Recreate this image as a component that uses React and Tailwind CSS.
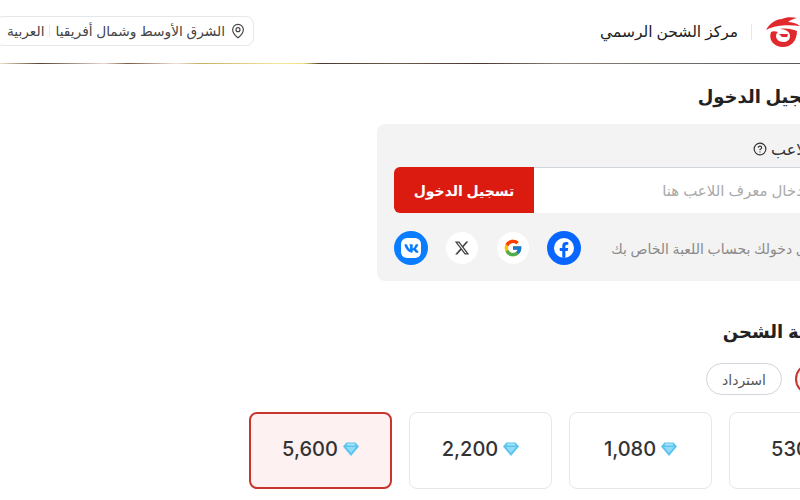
import React from "react";
import { MapPin, CircleHelp } from "lucide-react";
import { FcGoogle } from "react-icons/fc";
import { FaFacebookF, FaVk } from "react-icons/fa";
import { FaXTwitter } from "react-icons/fa6";

const amounts = [
  { value: "530", selected: false },
  { value: "1,080", selected: false },
  { value: "2,200", selected: false },
  { value: "5,600", selected: true },
];

const Logo = () => (
  <svg width="36" height="32" viewBox="0 0 36 32" fill="#e1282d" className="shrink-0">
    <path d="M2 14 C6 7 12 3 18 3 C22 1 28 1 33 2 C29 3 26 4 24 6 C28 6 32 7 36 10 C28 9 20 9 14 10 C9 11 5 12 2 14 Z" />
    <path d="M7 16 C4 24 10 31 19 31 C27 31 33 25 33 15 C28 13 22 12 16 13 C22 13 26 16 26 20 C26 24 23 26 19 26 C15 26 12 23 12 20 C12 18 13 17 14 16 C11 15 9 15 7 16 Z" />
    <path d="M15 18 H24 L23 21 H18 Z" />
  </svg>
);

const Gem = () => (
  <svg width="16" height="14" viewBox="0 0 16 14">
    <path d="M3.5 0.5 H12.5 L16 4.5 L8 14 L0 4.5 Z" fill="#5cc3f0" />
    <path d="M3 5 H13 L8 11 Z" fill="#8fdcf8" />
    <path d="M4.5 1.5 H11.5 L12.5 3.5 H3.5 Z" fill="#a5e6fb" />
  </svg>
);

const App = () => {
  return (
    <div className="w-[800px] h-[500px] overflow-hidden bg-white text-[#2b2b2b] font-['Noto_Sans','DejaVu_Sans',sans-serif]">
      {/* Header */}
      <header dir="rtl" className="w-[805px] -ml-[5px] h-[63px] flex items-center justify-between">
        <div className="flex items-center">
          <Logo />
          <span className="mr-[12px] ml-[13px] w-px h-[16px] bg-gray-200" />
          <span className="text-[15.5px] whitespace-nowrap text-[#222]">مركز الشحن الرسمي</span>
        </div>
        <div className="w-[259px] h-[30px] mb-[1px] flex items-center gap-[5px] pr-[7px] border border-gray-200 rounded-lg text-[#444] text-[13.75px] whitespace-nowrap overflow-hidden">
          <MapPin size={16} strokeWidth={1.75} className="shrink-0" />
          <span>الشرق الأوسط وشمال أفريقيا</span>
          <span className="w-px h-[12px] bg-gray-200" />
          <span>العربية</span>
        </div>
      </header>
      <div className="h-px w-full bg-[linear-gradient(90deg,#eee0c8_0%,#554433_5%,#e8d8d0_13%,#7a5c44_16%,#f0e0d8_22%,#c8b060_25%,#f5e9a0_35%,#f0e080_38%,#4a3a30_40%,#6b5c4c_50%,#4a3530_60%,#8a8078_70%,#5a5a5a_100%)]" />

      {/* Page is wider than the window, so the right side gets clipped */}
      <main dir="rtl" className="w-[872px]">
        <h2 className="mt-[18px] h-[28px] pr-[45px] text-[18px] font-bold leading-[28px] text-[#222] whitespace-nowrap">تسجيل الدخول</h2>
        <section className="mt-[14px] w-[495px] h-[157px] bg-[#f3f3f3] rounded-lg px-[17px] pt-[14px]">
          <div className="flex items-center gap-[4px] h-[22px] -mr-[6px] text-[16px] text-[#333]">
            <span>معرف اللاعب</span>
            <CircleHelp size={14} />
          </div>
          <div className="mt-[7px] flex h-[46px]">
            <div className="flex-1 flex items-center bg-white border-t border-gray-300 rounded-r-md pr-[48px] text-[15px] text-[#aaa] whitespace-nowrap">إدخال معرف اللاعب هنا</div>
            <button className="w-[140px] bg-[#db1a10] text-white text-[14px] font-bold rounded-l-md">تسجيل الدخول</button>
          </div>
          <div className="mt-[18px] flex items-center justify-between">
            <span className="text-[14px] text-[#8a8a8a] whitespace-nowrap -mr-[5px]">قم بتسجيل دخولك بحساب اللعبة الخاص بك</span>
            <div className="flex items-center gap-[18px]">
              <span className="w-[34px] h-[34px] rounded-full bg-[#0866ff] flex items-center justify-center">
                <span className="w-[20px] h-[20px] rounded-full bg-white flex items-end justify-center overflow-hidden text-[#0866ff]">
                  <FaFacebookF size={16} />
                </span>
              </span>
              <span className="w-[32px] h-[32px] ml-[1px] rounded-full bg-white flex items-center justify-center">
                <FcGoogle size={20} />
              </span>
              <span className="w-[32px] h-[32px] rounded-full bg-white flex items-center justify-center text-[#444]">
                <FaXTwitter size={16} />
              </span>
              <span className="w-[34px] h-[34px] rounded-full bg-[#0a7cff] flex items-center justify-center">
                <span className="w-[20px] h-[20px] rounded-[6px] bg-white flex items-center justify-center text-[#0a7cff]">
                  <FaVk size={15} />
                </span>
              </span>
            </div>
          </div>
        </section>

        <h2 className="mt-[36px] h-[28px] pr-[42px] text-[18px] font-bold leading-[28px] text-[#222] whitespace-nowrap">قيمة الشحن</h2>
        <div className="mt-[18px] flex items-center gap-[13px] pr-[37px] h-[32px]">
          <span className="w-[40px] h-[32px] rounded-full border-2 border-[#c8352f] bg-[#fdf1f1] shrink-0" />
          <span className="w-[76px] h-[32px] rounded-full border border-gray-300 flex items-center justify-center text-[14px] text-[#555]">استرداد</span>
        </div>
        <div className="mt-[17px] flex gap-[17px]">
          {amounts.map((a) => (
            <div
              key={a.value}
              dir="ltr"
              className={
                a.selected
                  ? "w-[143px] h-[77px] pb-[3px] rounded-lg border-2 border-[#c8352f] bg-[#fdf1f1] flex items-center justify-center gap-[5px]"
                  : "w-[143px] h-[77px] pb-[3px] rounded-lg border border-gray-200 bg-white flex items-center justify-center gap-[5px]"
              }
            >
              <span className="text-[20px] font-medium text-[#333] font-['Inter',sans-serif]">{a.value}</span>
              <Gem />
            </div>
          ))}
        </div>
      </main>
    </div>
  );
};

export default App;
